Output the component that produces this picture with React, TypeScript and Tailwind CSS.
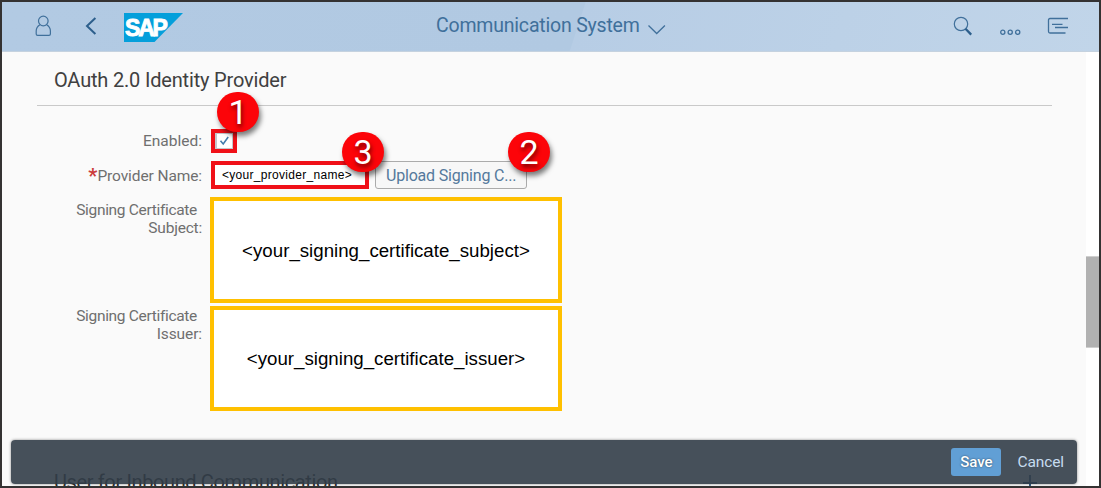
import type { ReactNode } from "react";

function Callout({ n, className }: { n: number; className: string }) {
  return (
    <span
      className={`absolute z-10 flex h-[40px] w-[42px] items-center justify-center rounded-full bg-[#fc0409] text-[34px] leading-none tracking-normal text-white shadow-[2px_4px_5px_rgba(0,0,0,0.5)] [text-shadow:1px_3px_4px_rgba(70,0,0,0.8)] ${className}`}
    >
      {n}
    </span>
  );
}

function Label({ children }: { children: ReactNode }) {
  return (
    <div className="w-[200px] shrink-0 whitespace-nowrap text-right text-[15.5px] leading-[18px] text-[#6f6f6f]">
      {children}
    </div>
  );
}

function Header() {
  return (
    <header className="flex h-[50px] shrink-0 items-start border-b border-[#c5d2df] bg-[linear-gradient(108deg,#b2cae3_0%,#b1c9e2_52.4%,#b7cde5_52.5%,#c1d5e9_100%)] text-[#40709b]">
      <svg className="ml-[33px] mt-[13px] h-[22px] w-[18px] shrink-0" viewBox="0 0 18 22" fill="none" stroke="currentColor" strokeWidth="1.2">
        <circle cx="8.3" cy="6" r="4.8" />
        <path d="M4.9 9.8C2.3 11.4 1.2 13.2 1.2 16V19a1.4 1.4 0 0 0 1.4 1.4H14a1.4 1.4 0 0 0 1.4-1.4V16c0-2.8-1.1-4.6-3.7-6.2" />
      </svg>
      <svg className="ml-[30px] mt-[14px] h-[20px] w-[14px] shrink-0" viewBox="0 0 14 20" fill="none" stroke="#2d5f8c" strokeWidth="2">
        <path d="M12.4 2 4 10l8.4 8" />
      </svg>
      <div className="relative ml-[27px] mt-[11px] h-[29px] w-[59px] shrink-0">
        <svg className="block h-[29px] w-[59px]" viewBox="0 0 59 29">
          <path d="M0 0H59L30.5 29H0Z" fill="#049fdb" />
        </svg>
        <span className="absolute left-[1px] top-[4px] font-['Liberation_Sans',sans-serif] text-[23px] font-bold leading-[23px] tracking-[-2.2px] text-white [-webkit-text-stroke:0.9px_white]">
          SAP
        </span>
      </div>
      <h1 className="ml-[253px] mt-[11px] w-[204px] shrink-0 whitespace-nowrap text-[19.5px] leading-[26px] tracking-[-0.2px]">
        Communication System
      </h1>
      <svg className="ml-[7px] mt-[21px] h-[13px] w-[20px] shrink-0" viewBox="0 0 20 13" fill="none" stroke="currentColor" strokeWidth="1.3">
        <path d="m1.5 2.5 8.2 8 8.2-8" />
      </svg>
      <svg className="ml-auto mt-[14px] h-[22px] w-[20px] shrink-0" viewBox="0 0 20 22" fill="none" stroke="currentColor" strokeWidth="1.2">
        <circle cx="8" cy="8" r="6.7" />
        <path d="m12.5 12.8 5.7 5.8" stroke="#2d5f8c" strokeWidth="2.3" />
      </svg>
      <svg className="ml-[26px] mt-[26px] h-[8px] w-[24px] shrink-0" viewBox="0 0 24 8" fill="none" stroke="currentColor" strokeWidth="1.3">
        <circle cx="3.8" cy="4.3" r="2.1" />
        <circle cx="11.2" cy="4.3" r="2.1" />
        <circle cx="18.7" cy="4.3" r="2.1" />
      </svg>
      <svg className="ml-[24px] mr-[30px] mt-[15px] h-[18px] w-[22px] shrink-0" viewBox="0 0 22 18" fill="none" stroke="currentColor" strokeWidth="1.3">
        <path d="M21 1.5H3Q1.5 1.5 1.5 3V14.5Q1.5 16 3 16H18.500M5 7.3H15.500M8 10.5H21" />
      </svg>
    </header>
  );
}

export default function App() {
  return (
    <div className="relative flex h-[488px] w-[1101px] flex-col overflow-hidden border-2 border-[#343232] bg-white font-[Roboto,sans-serif]">
      <Header />
      <div className="flex min-h-0 flex-1">
        <main className="w-[1084px] shrink-0 overflow-hidden bg-[#fafafa]">
          <h2 className="ml-[35px] h-[54px] w-[1015px] border-b border-[#c9c9c9] pl-[17px] pt-[14px] text-[20px] leading-[28px] tracking-[-0.18px] text-[#404040]">
            OAuth 2.0 Identity Provider
          </h2>
          <div className="flex pt-[23px]">
            <Label>
              <span className="relative top-[3px]">Enabled:</span>
            </Label>
            <div className="relative ml-[9px] flex h-[24px] w-[26px] items-center justify-center border-4 border-[#f01018] bg-[#c4c8cc]">
              <span className="flex h-[14px] w-[15px] items-center justify-center bg-white">
                <svg className="h-[10px] w-[11px]" viewBox="0 0 11 10" fill="none" stroke="#427cac" strokeWidth="1.6">
                  <path d="m1.5 4.8 2.7 3.2L9.200 1" />
                </svg>
              </span>
              <Callout n={1} className="-top-[41px] left-[2px]" />
            </div>
          </div>
          <div className="flex pt-[8px]">
            <Label>
              <span className="relative top-[6px]">
                <span className="relative top-[2px] text-[20px] font-bold leading-[10px] text-[#cc3b3b]">*</span>
                <span className="tracking-[-0.1px]">Provider Name:</span>
              </span>
            </Label>
            <div className="relative ml-[9px] h-[28px] w-[158px] border-4 border-[#f01018] bg-white pl-[7px] font-['Liberation_Sans',sans-serif] text-[12px] leading-[20px] tracking-[0.3px] text-black">
              &lt;your_provider_name&gt;
              <Callout n={3} className="-top-[33px] left-[127px] font-[Roboto,sans-serif]" />
            </div>
            <button className="relative ml-[6px] h-[28px] w-[152px] rounded-[3px] border border-[#ababab] bg-[#f7f7f7] pl-[10px] text-left text-[16px] leading-[27px] tracking-[-0.2px] text-[#54799c]">
              <span className="whitespace-nowrap">Upload Signing C...</span>
              <Callout n={2} className="-top-[30px] left-[132px]" />
            </button>
          </div>
          <div className="flex pt-[8px]">
            <Label>
              <div className="pr-[5px] pt-[4px] tracking-[-0.32px]">Signing Certificate</div>
              <div className="tracking-[-0.2px]">Subject:</div>
            </Label>
            <div className="ml-[8px] flex h-[106px] w-[352px] items-center justify-center border-4 border-[#ffc000] bg-white pt-[2px] font-['Liberation_Sans',sans-serif] text-[18.7px] text-black">
              &lt;your_signing_certificate_subject&gt;
            </div>
          </div>
          <div className="flex pt-[3px]">
            <Label>
              <div className="pr-[5px] pt-[1px] tracking-[-0.32px]">Signing Certificate</div>
              <div className="tracking-[-0.1px]">Issuer:</div>
            </Label>
            <div className="ml-[8px] flex h-[105px] w-[352px] items-center justify-center border-4 border-[#ffc000] bg-white pt-[2px] font-['Liberation_Sans',sans-serif] text-[18.7px] text-black">
              &lt;your_signing_certificate_issuer&gt;
            </div>
          </div>
          <div className="flex w-[1036px] items-start justify-between pl-[52px] pt-[57px] text-[20px] leading-[28px] text-[#303030]">
            <h2 className="whitespace-nowrap tracking-[-0.37px]">User for Inbound Communication</h2>
            <svg className="mt-[7px] h-[16px] w-[16px]" viewBox="0 0 16 16" stroke="#1d4d78" strokeWidth="1.8">
              <path d="M8 0V16M1 8H15" />
            </svg>
          </div>
        </main>
        <div className="w-[13px] shrink-0 bg-white pt-[204px]">
          <div className="h-[92px] border-y border-[#cfcfcf] bg-[#b1b1b1]" />
        </div>
      </div>
      <footer className="absolute left-[9px] top-[438px] flex h-[44px] w-[1066px] items-center justify-end rounded-[4px] bg-[#323d48]/90 pr-[13px] shadow-[0_0_3px_rgba(0,0,0,0.45)]">
        <button className="h-[28px] w-[50px] rounded-[3px] bg-[#619fd5] text-[15px] font-medium leading-[29px] text-white [text-shadow:0_0_2px_rgba(0,0,0,0.6)]">
          Save
        </button>
        <button className="ml-[16px] text-[15.5px] leading-[28px] tracking-[-0.1px] text-[#c6dcf0]">Cancel</button>
      </footer>
    </div>
  );
}
